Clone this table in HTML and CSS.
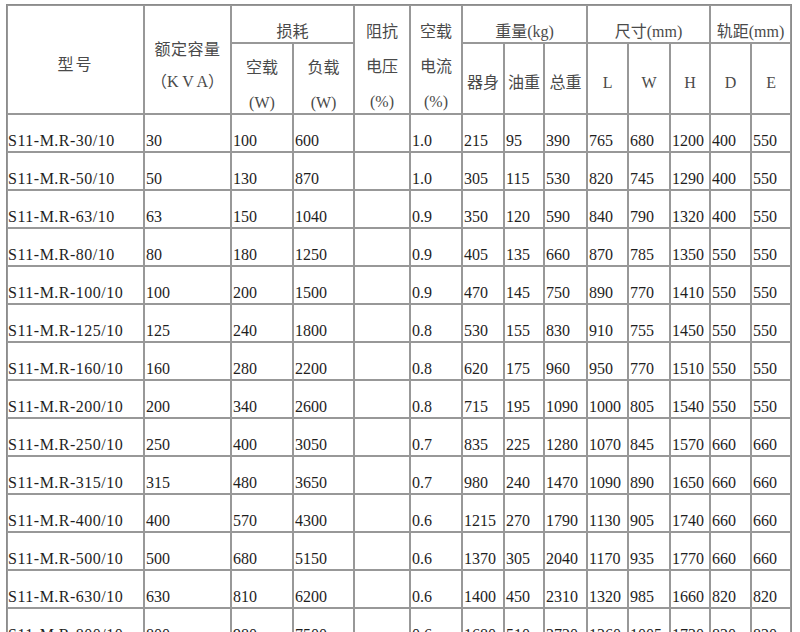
FILE: index.html
```html
<!DOCTYPE html>
<html lang="zh">
<head>
<meta charset="utf-8">
<title>S11-M.R 变压器参数表</title>
<link rel="stylesheet" href="styles.css">
</head>
<body>
<table class="spec">
  <colgroup>
    <col class="w137"><col class="w87"><col class="w62"><col class="w61"><col class="w56"><col class="w52">
    <col class="w42"><col class="w40"><col class="w43"><col class="w41"><col class="w42"><col class="w40"><col class="w41"><col class="w40">
  </colgroup>
  <thead>
    <tr class="h1">
      <th rowspan="2" class="hd-model"><div>型号</div></th>
      <th rowspan="2" class="hd-cap"><div>额定容量</div><div class="gap14">（K V A）</div></th>
      <th colspan="2" class="hd-group"><div>损耗</div></th>
      <th rowspan="2" class="hd-three"><div>阻抗</div><div class="gap17">电压</div><div class="gap17">(%)</div></th>
      <th rowspan="2" class="hd-three"><div>空载</div><div class="gap17">电流</div><div class="gap17">(%)</div></th>
      <th colspan="3" class="hd-group"><div>重量(kg)</div></th>
      <th colspan="3" class="hd-group"><div>尺寸(mm)</div></th>
      <th colspan="2" class="hd-group"><div>轨距(mm)</div></th>
    </tr>
    <tr class="h2">
      <th class="hd-two"><div>空载</div><div class="gap17">(W)</div></th>
      <th class="hd-two"><div>负载</div><div class="gap17">(W)</div></th>
      <th class="hd-one"><div>器身</div></th>
      <th class="hd-one"><div>油重</div></th>
      <th class="hd-one"><div>总重</div></th>
      <th class="hd-one"><div>L</div></th>
      <th class="hd-one"><div>W</div></th>
      <th class="hd-one"><div>H</div></th>
      <th class="hd-one"><div>D</div></th>
      <th class="hd-one"><div>E</div></th>
    </tr>
  </thead>
  <tbody>
    <tr><td class="model">S11-M.R-30/10</td><td>30</td><td>100</td><td>600</td><td></td><td>1.0</td><td>215</td><td>95</td><td>390</td><td>765</td><td>680</td><td>1200</td><td>400</td><td>550</td></tr>
    <tr><td class="model">S11-M.R-50/10</td><td>50</td><td>130</td><td>870</td><td></td><td>1.0</td><td>305</td><td>115</td><td>530</td><td>820</td><td>745</td><td>1290</td><td>400</td><td>550</td></tr>
    <tr><td class="model">S11-M.R-63/10</td><td>63</td><td>150</td><td>1040</td><td></td><td>0.9</td><td>350</td><td>120</td><td>590</td><td>840</td><td>790</td><td>1320</td><td>400</td><td>550</td></tr>
    <tr><td class="model">S11-M.R-80/10</td><td>80</td><td>180</td><td>1250</td><td></td><td>0.9</td><td>405</td><td>135</td><td>660</td><td>870</td><td>785</td><td>1350</td><td>550</td><td>550</td></tr>
    <tr><td class="model">S11-M.R-100/10</td><td>100</td><td>200</td><td>1500</td><td></td><td>0.9</td><td>470</td><td>145</td><td>750</td><td>890</td><td>770</td><td>1410</td><td>550</td><td>550</td></tr>
    <tr><td class="model">S11-M.R-125/10</td><td>125</td><td>240</td><td>1800</td><td></td><td>0.8</td><td>530</td><td>155</td><td>830</td><td>910</td><td>755</td><td>1450</td><td>550</td><td>550</td></tr>
    <tr><td class="model">S11-M.R-160/10</td><td>160</td><td>280</td><td>2200</td><td></td><td>0.8</td><td>620</td><td>175</td><td>960</td><td>950</td><td>770</td><td>1510</td><td>550</td><td>550</td></tr>
    <tr><td class="model">S11-M.R-200/10</td><td>200</td><td>340</td><td>2600</td><td></td><td>0.8</td><td>715</td><td>195</td><td>1090</td><td>1000</td><td>805</td><td>1540</td><td>550</td><td>550</td></tr>
    <tr><td class="model">S11-M.R-250/10</td><td>250</td><td>400</td><td>3050</td><td></td><td>0.7</td><td>835</td><td>225</td><td>1280</td><td>1070</td><td>845</td><td>1570</td><td>660</td><td>660</td></tr>
    <tr><td class="model">S11-M.R-315/10</td><td>315</td><td>480</td><td>3650</td><td></td><td>0.7</td><td>980</td><td>240</td><td>1470</td><td>1090</td><td>890</td><td>1650</td><td>660</td><td>660</td></tr>
    <tr><td class="model">S11-M.R-400/10</td><td>400</td><td>570</td><td>4300</td><td></td><td>0.6</td><td>1215</td><td>270</td><td>1790</td><td>1130</td><td>905</td><td>1740</td><td>660</td><td>660</td></tr>
    <tr><td class="model">S11-M.R-500/10</td><td>500</td><td>680</td><td>5150</td><td></td><td>0.6</td><td>1370</td><td>305</td><td>2040</td><td>1170</td><td>935</td><td>1770</td><td>660</td><td>660</td></tr>
    <tr><td class="model">S11-M.R-630/10</td><td>630</td><td>810</td><td>6200</td><td></td><td>0.6</td><td>1400</td><td>450</td><td>2310</td><td>1320</td><td>985</td><td>1660</td><td>820</td><td>820</td></tr>
    <tr><td class="model">S11-M.R-800/10</td><td>800</td><td>980</td><td>7500</td><td></td><td>0.6</td><td>1680</td><td>510</td><td>2720</td><td>1360</td><td>1005</td><td>1730</td><td>820</td><td>820</td></tr>
  </tbody>
</table>
</body>
</html>
```

FILE: styles.css
```css
html, body {
  margin: 0;
  padding: 0;
  background: #ffffff;
}

body {
  font-family: "Liberation Serif", "Noto Sans CJK SC", serif;
  font-size: 16px;
  color: #222222;
  overflow: hidden;
}

.spec {
  margin: 4px 0 0 6px;
  table-layout: fixed;
  width: 786px;
  border-collapse: separate;
  border-spacing: 0;
  border: 1px solid #8c8c8c;
}

.w137 { width: 137px; }
.w87 { width: 87px; }
.w62 { width: 62px; }
.w61 { width: 61px; }
.w56 { width: 56px; }
.w52 { width: 52px; }
.w43 { width: 43px; }
.w42 { width: 42px; }
.w41 { width: 41px; }
.w40 { width: 40px; }

.spec th,
.spec td {
  border: 1px solid #989898;
  box-sizing: border-box;
  overflow: visible;
  white-space: nowrap;
}

.spec th {
  font-weight: normal;
  color: #4a4a4a;
  text-align: center;
  vertical-align: top;
  padding: 0;
  line-height: 18px;
}

.spec th div {
  height: 18px;
}

.h1 { height: 38px; }
.h2 { height: 71px; }

.hd-model { padding-top: 50px !important; }
.hd-cap { padding-top: 35px !important; }
.hd-three { padding-top: 17px !important; }
.hd-group { padding-top: 17px !important; }
.hd-two { padding-top: 15px !important; }
.hd-one { padding-top: 30px !important; }

.hd-cap .gap14 { margin-top: 14px; letter-spacing: 0; }
.gap17 { margin-top: 17px; }

.hd-model div { letter-spacing: 2px; }
.hd-cap div:first-child { letter-spacing: 0.5px; }

.spec tbody tr {
  height: 38px;
}

.spec td {
  vertical-align: bottom;
  padding: 0 1px 1px 1px;
  line-height: 18px;
  text-align: left;
  color: #1e1e1e;
}

.spec td.model {
  padding-left: 0;
  letter-spacing: 0.5px;
}
```
